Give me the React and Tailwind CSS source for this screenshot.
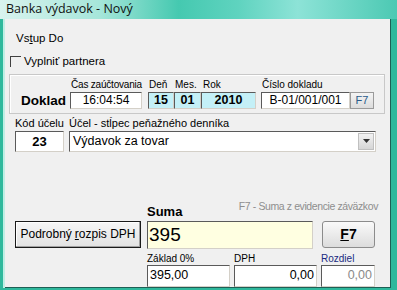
import React from 'react';

const sunken = 'border border-t-[#5a5a5a] border-l-[#5a5a5a] border-b-[#d4d0c8] border-r-[#d4d0c8]';

function Field({ className = '', children }) {
  return (
    <div className={`${sunken} flex items-center ${className}`}>{children}</div>
  );
}

export default function App() {
  return (
    <div
      className="w-[397px] h-[290px] flex flex-col bg-[#2fb89c] overflow-hidden"
      style={{ fontFamily: '"Liberation Sans", Arial, sans-serif' }}
    >
      {/* title bar */}
      <div className="h-[25px] flex items-center pl-[6px] bg-[linear-gradient(90deg,#d9f3ee_0%,#a6e6da_25%,#45c9b0_45%,#5fd3bf_60%,#8de3d7_75%,#4cc9b3_100%)]">
        <span className="text-[12.5px] text-[#111]" style={{ fontFamily: '"Open Sans", sans-serif' }}>
          Banka výdavok - Nový
        </span>
      </div>

      <div className="flex-1 flex pl-[3px] pr-[6px] pb-[4px] bg-[#2fb89c]">
        <div className="w-[2px] bg-[#bfeee4]" />
        <div className="flex-1 bg-[#f0f0f0] border-r border-b border-[#1e5f55] flex flex-col text-[#000]">
          {/* Vstup Do */}
          <div className="pl-[11px] pt-[13px] text-[11.5px] leading-[13px]">
            Vs<span className="underline">t</span>up Do
          </div>

          {/* checkbox */}
          <div className="flex items-center pl-[5px] mt-[10px] gap-[3px]">
            <div className="w-[11px] h-[11px] border-t border-l border-[#404040] border-b-[#fff] border-r-[#fff]" />
            <span className="text-[11.5px] leading-[13px]">Vyplniť partnera</span>
          </div>

          {/* Doklad group */}
          <div className="ml-[4px] mr-[5px] mt-[6px] h-[40px] border border-[#c8c8c8] shadow-[inset_1px_1px_0_#fff] flex items-end pb-[4px] pl-[11px]">
            <div className="text-[13.5px] font-bold leading-[16px] w-[49px]">Doklad</div>
            <div className="flex flex-col">
              <span className="text-[10px] leading-[12px] pl-[1px] mb-[1px] tracking-[-0.2px]">Čas zaúčtovania</span>
              <Field className="w-[72px] h-[17px] bg-white justify-center text-[12px]">16:04:54</Field>
            </div>
            <div className="flex flex-col ml-[6px]">
              <div className="flex text-[10px] leading-[12px] mb-[1px]">
                <span className="w-[26px] pl-[1px]">Deň</span>
                <span className="w-[27px] pl-[1px]">Mes.</span>
                <span className="pl-[2px]">Rok</span>
              </div>
              <div className="flex">
                <Field className="w-[26px] h-[17px] bg-[#c4f0f7] justify-center text-[12.5px] font-bold">15</Field>
                <Field className="w-[27px] h-[17px] bg-[#c4f0f7] justify-center text-[12.5px] font-bold">01</Field>
                <Field className="w-[55px] h-[17px] bg-[#c4f0f7] justify-center text-[12.5px] font-bold">2010</Field>
              </div>
            </div>
            <div className="flex flex-col ml-[5px]">
              <span className="text-[10px] leading-[12px] pl-[1px] mb-[1px]">Číslo dokladu</span>
              <div className="flex">
                <Field className="w-[89px] h-[17px] bg-white justify-center text-[12px]">B-01/001/001</Field>
                <div className="w-[24px] h-[17px] border border-[#9a9a9a] bg-[linear-gradient(#f4f4f4,#dcdcdc)] flex items-center justify-center text-[11px] text-[#2a5a8a]">
                  F7
                </div>
              </div>
            </div>
          </div>

          {/* Kód účelu row */}
          <div className="flex pl-[10px] mt-[3px]">
            <div className="flex flex-col w-[49px]">
              <span className="text-[11px] leading-[13px] mb-[1px] whitespace-nowrap">Kód účelu</span>
              <Field className="w-[49px] h-[21px] bg-white justify-center text-[13px] font-bold">23</Field>
            </div>
            <div className="flex flex-col ml-[5px]">
              <span className="text-[11px] leading-[13px] mb-[1px]">Účel - stĺpec peňažného denníka</span>
              <Field className="w-[307px] h-[21px] bg-white justify-between text-[12.5px] pl-[3px]">
                <span>Výdavok za tovar</span>
                <div className="w-[16px] h-[17px] mr-[1px] bg-[linear-gradient(#f2f2f2,#d6d6d6)] border border-[#c0c0c0] flex items-center justify-center">
                  <svg width="7" height="4" viewBox="0 0 7 4"><path d="M0 0h7L3.5 4z" fill="#333" /></svg>
                </div>
              </Field>
            </div>
          </div>

          {/* bottom */}
          <div className="flex pl-[10px] mt-[47px]">
            <div className="w-[126px] h-[27px] mt-[22px] border border-[#1a1a1a] shadow-[inset_-1px_-1px_0_#a0a0a0,inset_1px_1px_0_#fff] bg-[linear-gradient(#f6f6f6,#e2e2e2)] flex items-center justify-center text-[12px]">
              Podrobný <span className="underline ml-[3px]">r</span>ozpis DPH
            </div>
            <div className="flex flex-col ml-[6px] w-[228px]">
              <div className="flex items-end justify-between h-[20px]">
                <span className="text-[13px] font-bold leading-[14px]">Suma</span>
                <span className="text-[10.5px] tracking-[-0.4px] text-[#8e8e8e] leading-[13px] mb-[6px] mr-[-3px]">F7 - Suma z evidencie záväzkov</span>
              </div>
              <div className="flex mt-[2px] items-start">
                <Field className="w-[166px] h-[28px] bg-[#ffffe1] text-[19px] pl-[1px]">395</Field>
                <div className="w-[53px] h-[27px] ml-[9px] border border-[#8c8c8c] rounded-[3px] bg-[linear-gradient(#fafafa,#dcdcdc)] flex items-center justify-center text-[14px] font-bold">
                  <span className="underline">F</span>7
                </div>
              </div>
              <div className="flex mt-[4px]">
                <div className="flex flex-col w-[83px]">
                  <span className="text-[10px] leading-[12px]">Základ 0%</span>
                  <Field className="h-[22px] bg-white text-[12.5px] pl-[2px]">395,00</Field>
                </div>
                <div className="flex flex-col w-[83px] ml-[4px]">
                  <span className="text-[10px] leading-[12px]">DPH</span>
                  <Field className="h-[22px] bg-white text-[12.5px] justify-end pr-[2px]">0,00</Field>
                </div>
                <div className="flex flex-col w-[54px] ml-[4px]">
                  <span className="text-[10px] leading-[12px] text-[#1a2a80]">Rozdiel</span>
                  <Field className="h-[22px] bg-white text-[12.5px] justify-end pr-[2px] text-[#8a8a8a]">0,00</Field>
                </div>
              </div>
            </div>
          </div>
        </div>
      </div>
    </div>
  );
}
